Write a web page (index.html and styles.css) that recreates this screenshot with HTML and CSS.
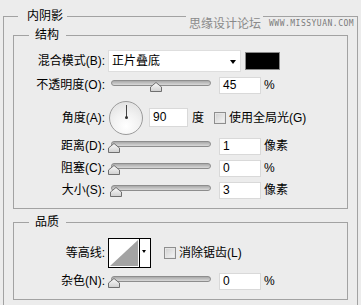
FILE: index.html
```html
<!DOCTYPE html>
<html lang="zh">
<head>
<meta charset="utf-8">
<link rel="stylesheet" href="styles.css">
</head>
<body>
<div class="panel">
  <fieldset class="group outer">
    <legend class="lg-outer">内阴影</legend>

    <fieldset class="group sub structure">
      <legend class="lg-sub">结构</legend>

      <div class="row r24 first">
        <span class="lbl">混合模式(B):</span>
        <div class="select"><span class="sel-text">正片叠底</span><span class="sel-arrow"></span></div>
        <div class="swatch"></div>
      </div>

      <div class="row r24">
        <span class="lbl">不透明度(O):</span>
        <div class="slider"><div class="track"></div><svg class="thumb" style="left:40px" width="12" height="10" viewBox="0 0 12 10"><defs><linearGradient id="tg1" x1="0" y1="0" x2="0" y2="1"><stop offset="0" stop-color="#fbfbfb"/><stop offset="1" stop-color="#cfcfcf"/></linearGradient></defs><polygon points="0.5,5 6,0.5 11.5,5 11.5,9.5 0.5,9.5" fill="url(#tg1)" stroke="#6f6f6f"/></svg></div>
        <div class="num">45</div>
        <span class="unit">%</span>
      </div>

      <div class="row r-angle">
        <span class="lbl">角度(A):</span>
        <div class="dial"><span class="dial-hand"></span><span class="dial-dot"></span></div>
        <div class="num angle">90</div>
        <span class="deg">度</span>
        <span class="check"></span>
        <span class="check-text">使用全局光(G)</span>
      </div>

      <div class="row r22">
        <span class="lbl">距离(D):</span>
        <div class="slider"><div class="track"></div><svg class="thumb" style="left:-2px" width="12" height="10" viewBox="0 0 12 10"><polygon points="0.5,5 6,0.5 11.5,5 11.5,9.5 0.5,9.5" fill="url(#tg1)" stroke="#6f6f6f"/></svg></div>
        <div class="num">1</div>
        <span class="unit">像素</span>
      </div>

      <div class="row r22">
        <span class="lbl">阻塞(C):</span>
        <div class="slider"><div class="track"></div><svg class="thumb" style="left:-2px" width="12" height="10" viewBox="0 0 12 10"><polygon points="0.5,5 6,0.5 11.5,5 11.5,9.5 0.5,9.5" fill="url(#tg1)" stroke="#6f6f6f"/></svg></div>
        <div class="num">0</div>
        <span class="unit">%</span>
      </div>

      <div class="row r22">
        <span class="lbl">大小(S):</span>
        <div class="slider"><div class="track"></div><svg class="thumb" style="left:0px" width="12" height="10" viewBox="0 0 12 10"><polygon points="0.5,5 6,0.5 11.5,5 11.5,9.5 0.5,9.5" fill="url(#tg1)" stroke="#6f6f6f"/></svg></div>
        <div class="num">3</div>
        <span class="unit">像素</span>
      </div>
    </fieldset>

    <fieldset class="group sub quality">
      <legend class="lg-sub">品质</legend>

      <div class="row r-contour">
        <span class="lbl">等高线:</span>
        <div class="contour">
          <svg class="contour-curve" width="30" height="28" viewBox="0 0 30 28"><rect x="0" y="0" width="30" height="28" fill="#fff"/><polygon points="1,27 29,1 29,27" fill="#a3a3a3"/></svg>
          <span class="contour-btn"><span class="contour-arrow"></span></span>
        </div>
        <span class="check aa"></span>
        <span class="check-text">消除锯齿(L)</span>
      </div>

      <div class="row r22 noise">
        <span class="lbl">杂色(N):</span>
        <div class="slider"><div class="track"></div><svg class="thumb" style="left:-2px" width="12" height="10" viewBox="0 0 12 10"><polygon points="0.5,5 6,0.5 11.5,5 11.5,9.5 0.5,9.5" fill="url(#tg1)" stroke="#6f6f6f"/></svg></div>
        <div class="num">0</div>
        <span class="unit">%</span>
      </div>
    </fieldset>
  </fieldset>

  <div class="watermark"><span class="wm-cn">思缘设计论坛</span><span class="wm-en">WWW.MISSYUAN.COM</span></div>
</div>
</body>
</html>
```

FILE: styles.css
```css
* { box-sizing: border-box; }

html, body {
  margin: 0;
  padding: 0;
  background: #ececec;
}

body {
  font-family: "Liberation Sans", "Noto Sans CJK SC", sans-serif;
  font-size: 12px;
  color: #000;
  width: 361px;
  height: 305px;
  overflow: hidden;
}

.panel {
  position: relative;
  width: 361px;
  height: 305px;
}

.group {
  border: 1px solid #a2a2a2;
  margin: 0;
  padding: 0;
  min-inline-size: 0;
}

.group legend {
  font-size: 12px;
  line-height: 16px;
  height: 16px;
}

.outer {
  margin: 8px 0 0 3px;
  width: 355px;
  padding-bottom: 12px;
}

.lg-outer {
  margin-left: 14px;
  padding: 0 4px 0 9px;
}

.sub {
  margin-left: 9px;
  width: 335px;
  padding-bottom: 7px;
}

.lg-sub {
  margin-left: 15px;
  padding: 0 7px 0 6px;
}

.structure { margin-top: 3px; }
.quality { margin-top: 5px; }

.row {
  display: flex;
  align-items: center;
  line-height: 14px;
}

.r24 { height: 24px; }
.r22 { height: 22px; }
.first { margin-top: 6px; }
.r-angle { height: 35px; margin-top: 3px; }
.r-contour { height: 31px; margin-top: 7px; }
.noise { margin-top: 2px; }

.lbl {
  width: 91px;
  text-align: right;
  white-space: nowrap;
  flex: none;
}

/* dropdown */
.select {
  margin-left: 3px;
  width: 133px;
  height: 22px;
  background: #fff;
  border: 1px solid #dedede;
  display: flex;
  align-items: center;
  padding-left: 3px;
  position: relative;
}

.sel-arrow {
  position: absolute;
  right: 4px;
  top: 9px;
  width: 0;
  height: 0;
  border-left: 3.5px solid transparent;
  border-right: 3.5px solid transparent;
  border-top: 4px solid #000;
}

.swatch {
  margin-left: 4px;
  width: 35px;
  height: 18px;
  background: #000;
  border: 1px solid #8a8a8a;
}

/* sliders */
.slider {
  position: relative;
  margin-left: 5px;
  width: 101px;
  align-self: stretch;
  flex: none;
}

.track {
  position: absolute;
  left: 1px;
  right: 0;
  top: calc(50% - 5px);
  height: 6px;
  border: 1px solid #8d8d8d;
  border-radius: 3px;
  background: linear-gradient(#a9a9a9, #d9d9d9);
}

.thumb {
  position: absolute;
  top: calc(50% - 3px);
  display: block;
}

/* numeric fields */
.num {
  margin-left: 8px;
  width: 42px;
  height: 17px;
  background: #fff;
  border: 1px solid #d9d9d9;
  padding-left: 3px;
  line-height: 15px;
  font-size: 12px;
  flex: none;
}

.unit {
  margin-left: 3px;
  white-space: nowrap;
}

/* angle */
.dial {
  position: relative;
  margin-left: 4px;
  width: 34px;
  height: 34px;
  border-radius: 50%;
  border: 1px solid #9b9b9b;
  background: radial-gradient(circle at 50% 75%, #ffffff 0%, #f2f2f2 45%, #dcdcdc 100%);
  flex: none;
}

.dial-hand {
  position: absolute;
  left: 15.5px;
  top: 3px;
  width: 1px;
  height: 13px;
  background: #444;
}

.dial-dot {
  position: absolute;
  left: 14.5px;
  top: 14.5px;
  width: 3px;
  height: 3px;
  border-radius: 50%;
  background: #333;
}

.num.angle {
  margin-left: 6px;
  width: 39px;
  height: 19px;
  line-height: 17px;
}

.deg { margin-left: 4px; }

.check {
  margin-left: 10px;
  width: 12px;
  height: 12px;
  border: 1px solid #8e8e8e;
  background: linear-gradient(135deg, #cfcfcf, #f7f7f7);
  box-shadow: inset 0 0 0 1px #e6e6e6;
  flex: none;
}

.check-text {
  margin-left: 3px;
  white-space: nowrap;
}

/* contour */
.contour {
  margin-left: 3px;
  width: 43px;
  height: 30px;
  border: 1px solid #000;
  background: #fff;
  display: flex;
  flex: none;
}

.contour-curve { display: block; }

.contour-btn {
  width: 11px;
  border-left: 1px solid #000;
  position: relative;
}

.contour-arrow {
  position: absolute;
  left: 2px;
  top: 11px;
  width: 0;
  height: 0;
  border-left: 2.5px solid transparent;
  border-right: 2.5px solid transparent;
  border-top: 3px solid #000;
}

.check.aa { margin-left: 13px; }

/* watermark */
.watermark {
  position: absolute;
  left: 186px;
  top: 8px;
  display: flex;
  align-items: center;
  gap: 5px;
  height: 16px;
}

.wm-cn {
  background: #ececec;
  color: #8a8a8a;
  font-size: 12px;
  line-height: 16px;
  padding: 0 2px 0 3px;
}

.wm-en {
  background: #ececec;
  color: #7a7a7a;
  font-family: "DejaVu Sans Mono", monospace;
  font-size: 8px;
  letter-spacing: 0.5px;
  line-height: 10px;
  padding: 0 1px;
}
```
